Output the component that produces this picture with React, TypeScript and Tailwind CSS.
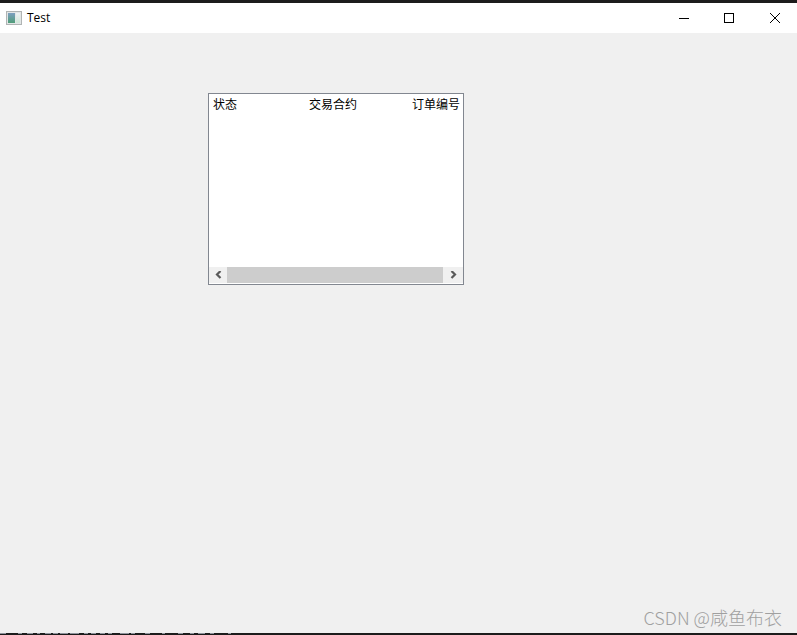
import { ReactNode } from "react";

const font = "font-['Liberation_Sans','Noto_Sans_CJK_SC',sans-serif]";

// bits of the window underneath that peek through along the bottom edge
const bottomSpecks = [
  [0, 6], [18, 4], [27, 6], [37, 3], [45, 6], [53, 5], [60, 8], [70, 9], [84, 4], [91, 5],
  [100, 5], [108, 4], [120, 9], [131, 4], [145, 5], [162, 3], [178, 5], [190, 4], [198, 7], [210, 4], [228, 3],
];

export default function App() {
  return (
    <div className={`flex h-[635px] w-[797px] flex-col overflow-hidden bg-[#f0f0f0] ${font}`}>
      <div className="h-[3px] bg-[#1c1c1c]" />
      <TitleBar />
      <main className="flex-1 pl-[208px] pt-[60px]">
        <TableWidget />
      </main>
      <footer className="flex h-[33px] items-start justify-end pr-[15px] pt-[5px]">
        <span className="font-['Noto_Sans_CJK_SC',sans-serif] text-[18px] font-light leading-[24px] text-[#a0a0a0]">
          CSDN @咸鱼布衣
        </span>
      </footer>
      <svg width="797" height="2" className="block bg-[#1c1c1c]">
        {bottomSpecks.map(([x, w]) => (
          <rect key={x} x={x} y="0" width={w} height="1" fill="#8f939c" />
        ))}
      </svg>
    </div>
  );
}

function TitleBar() {
  return (
    <header className="flex h-[30px] items-center bg-white">
      <svg width="16" height="14" viewBox="0 0 16 14" className="ml-[6px]">
        <defs>
          <linearGradient id="pane" x1="0" y1="0" x2="0" y2="1">
            <stop offset="0" stopColor="#7d9fc0" />
            <stop offset="1" stopColor="#4f9d78" />
          </linearGradient>
          <linearGradient id="side" x1="0" y1="0" x2="0" y2="1">
            <stop offset="0" stopColor="#eef2f4" />
            <stop offset="1" stopColor="#cfe6d8" />
          </linearGradient>
        </defs>
        <rect x="0.5" y="0.5" width="15" height="13" fill="#e2e6e6" stroke="#b0b4b4" />
        <rect x="2" y="2" width="7" height="10" fill="url(#pane)" />
        <rect x="10" y="2" width="4" height="10" fill="url(#side)" />
      </svg>
      <span className="ml-[5px] font-['Open_Sans',sans-serif] text-[12px] text-black">Test</span>
      <div className="-mr-px ml-auto flex">
        <WindowButton width="w-[44px]">
          <path d="M0 5.5H10" stroke="black" />
        </WindowButton>
        <WindowButton width="w-[46px]">
          <rect x="0.5" y="0.5" width="9" height="9" fill="none" stroke="black" />
        </WindowButton>
        <WindowButton width="w-[46px]">
          <path d="M0 0L10 10M10 0L0 10" stroke="black" />
        </WindowButton>
      </div>
    </header>
  );
}

function WindowButton({ width, children }: { width: string; children: ReactNode }) {
  return (
    <div className={`flex h-[30px] items-center justify-center ${width}`}>
      <svg width="10" height="10" viewBox="0 0 10 10">
        {children}
      </svg>
    </div>
  );
}

function TableWidget() {
  return (
    <div className="flex h-[192px] w-[256px] flex-col border border-[#828790] bg-white">
      <div className="flex h-[22px] items-center pl-[4px] text-[12px] text-black">
        <span className="w-[96px]">状态</span>
        <span className="w-[103px]">交易合约</span>
        <span>订单编号</span>
      </div>
      <div className="flex-1" />
      <div className="mb-[1px] flex h-[16px] items-center bg-[#f0f0f0]">
        <div className="flex w-[18px] justify-center">
          <svg width="7" height="8" viewBox="0 0 7 8">
            <path d="M5.5 0L2 3.5L5.5 7" fill="none" stroke="#5a5a5a" strokeWidth="2.2" />
          </svg>
        </div>
        <div className="h-full flex-1 bg-[#cdcdcd]" />
        <div className="flex w-[20px] justify-center">
          <svg width="7" height="8" viewBox="0 0 7 8">
            <path d="M1.5 0L5 3.5L1.5 7" fill="none" stroke="#5a5a5a" strokeWidth="2.2" />
          </svg>
        </div>
      </div>
    </div>
  );
}
